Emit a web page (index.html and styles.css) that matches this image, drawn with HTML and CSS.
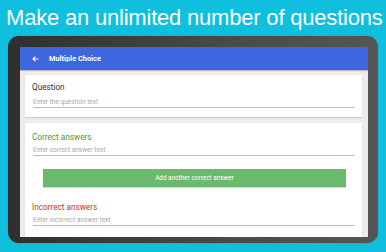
FILE: index.html
```html
<!DOCTYPE html>
<html>
<head>
<meta charset="utf-8">
<link rel="stylesheet" href="styles.css">
</head>
<body>
<div class="page">
  <h1 class="title">Make an unlimited number of questions</h1>
  <div class="tablet">
    <div class="screen">
      <div class="appbar">
        <svg class="back" width="7" height="6" viewBox="0 0 7 6"><path d="M6.5 3H1.2M3.4 0.7L1 3l2.4 2.3" fill="none" stroke="#fff" stroke-width="1.1"/></svg>
        <span class="appbar-title">Multiple Choice</span>
      </div>
      <div class="content">
        <div class="card card-question">
          <div class="label">Question</div>
          <div class="field field-wide">Enter the question text</div>
        </div>
        <div class="card card-answers">
          <div class="label label-green">Correct answers</div>
          <div class="field">Enter correct answer text</div>
          <div class="btn">Add another correct answer</div>
          <div class="label label-red">Incorrect answers</div>
          <div class="field">Enter incorrect answer text</div>
        </div>
      </div>
    </div>
  </div>
</div>
</body>
</html>
```

FILE: styles.css
```css
* { box-sizing: border-box; }
html, body { margin: 0; padding: 0; }
body {
  width: 386px;
  height: 252px;
  overflow: hidden;
  background: #10bfdd;
  font-family: Roboto, "Liberation Sans", sans-serif;
}
.page {
  display: flex;
  flex-direction: column;
}
.title {
  margin: 0;
  height: 36px;
  padding: 6px 0 0 6px;
  font-family: "Liberation Sans", Arial, sans-serif;
  font-weight: 400;
  font-size: 22px;
  line-height: 24px;
  color: #fff;
  white-space: nowrap;
  letter-spacing: -0.2px;
}
.tablet {
  margin-left: 8px;
  width: 370px;
  height: 207px;
  padding: 11px 10px 6px 12px;
  border-radius: 11px;
  background: linear-gradient(90deg, #2f2f2f, #4a4a4a 60%, #555);
  box-shadow: 0 0 1px rgba(0,0,0,0.4);
}
.screen {
  width: 348px;
  height: 190px;
  background: #ececec;
  overflow: hidden;
  display: flex;
  flex-direction: column;
}
.appbar {
  height: 23px;
  flex: none;
  background: #3e66df;
  display: flex;
  align-items: center;
  padding-left: 12px;
  box-shadow: 0 1px 1px rgba(0,0,0,0.2);
}
.back { display: block; }
.appbar-title {
  margin-left: 10px;
  color: #fff;
  font-weight: 700;
  font-size: 7.4px;
}
.content {
  padding: 5px 6px 0 5px;
  display: flex;
  flex-direction: column;
  gap: 6px;
}
.card {
  background: #fff;
  box-shadow: 0 1px 1px rgba(0,0,0,0.12);
  padding: 7px 7px 0 7px;
}
.card-question { height: 42px; }
.card-answers { height: 130px; padding-top: 9px; }
.label {
  font-size: 8.2px;
  line-height: 10px;
  color: #333;
}
.label-green { color: #3d9e3d; }
.label-red { color: #d03030; }
.field {
  margin: 4px 0 0 1px;
  font-size: 6.5px;
  line-height: 9px;
  color: #a8a8a8;
  border-bottom: 1px solid #bdbdbd;
}
.field-wide { margin-top: 6px; }
.btn {
  margin: 13px 9px 15px 11px;
  height: 18px;
  background: #6bb86f;
  color: #fff;
  font-size: 6.4px;
  display: flex;
  align-items: center;
  justify-content: center;
  box-shadow: 0 1px 1px rgba(0,0,0,0.15);
}
```
